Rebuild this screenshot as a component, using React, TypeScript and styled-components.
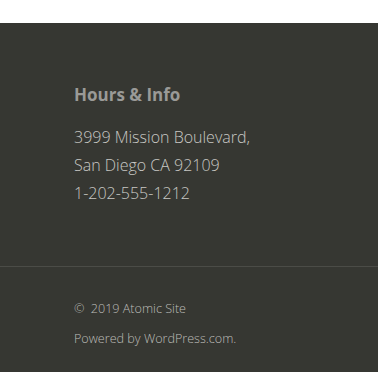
import styled, { createGlobalStyle } from "styled-components"

const GlobalStyle = createGlobalStyle`
    html, body {
        margin: 0;
        padding: 0;
        background: #ffffff;
    }
    body {
        font-family: "Open Sans", "Liberation Sans", sans-serif;
    }
`

const Page = styled.div`
    padding-top: 23px;
    height: 372px;
    box-sizing: border-box;
`

const Footer = styled.footer`
    background: #363732;
    height: 349px;
    display: flex;
    flex-direction: column;
`

const Widgets = styled.div`
    padding: 61px 74px 59px 74px;
`

const WidgetTitle = styled.h2`
    margin: 0 0 17px;
    font-size: 17px;
    line-height: 22px;
    font-weight: 700;
    color: #9a9a97;
`

const Address = styled.p`
    margin: 0;
    font-size: 16px;
    line-height: 28px;
    font-weight: 300;
    color: #c8c8c4;
`

const SiteInfo = styled.div`
    border-top: 1px solid #4b4c47;
    padding: 32px 74px 0;
    display: flex;
    flex-direction: column;
    gap: 10px;
`

const InfoLine = styled.p`
    margin: 0;
    font-size: 12.6px;
    line-height: 20px;
    font-weight: 300;
    color: #bcbcb8;

    & a {
        color: inherit;
        text-decoration: none;
    }
`

const Copy = styled.span`
    margin-right: 3px;
`

const App = () => {
    return (
        <>
            <GlobalStyle />
            <Page>
                <Footer>
                    <Widgets>
                        <WidgetTitle>Hours &amp; Info</WidgetTitle>
                        <Address>
                            3999 Mission Boulevard,
                            <br />
                            San Diego CA 92109
                            <br />
                            1-202-555-1212
                        </Address>
                    </Widgets>
                    <SiteInfo>
                        <InfoLine>
                            <Copy>©</Copy> 2019 Atomic Site
                        </InfoLine>
                        <InfoLine>
                            <a href="#">Powered by WordPress.com</a>.
                        </InfoLine>
                    </SiteInfo>
                </Footer>
            </Page>
        </>
    )
}

export default App
